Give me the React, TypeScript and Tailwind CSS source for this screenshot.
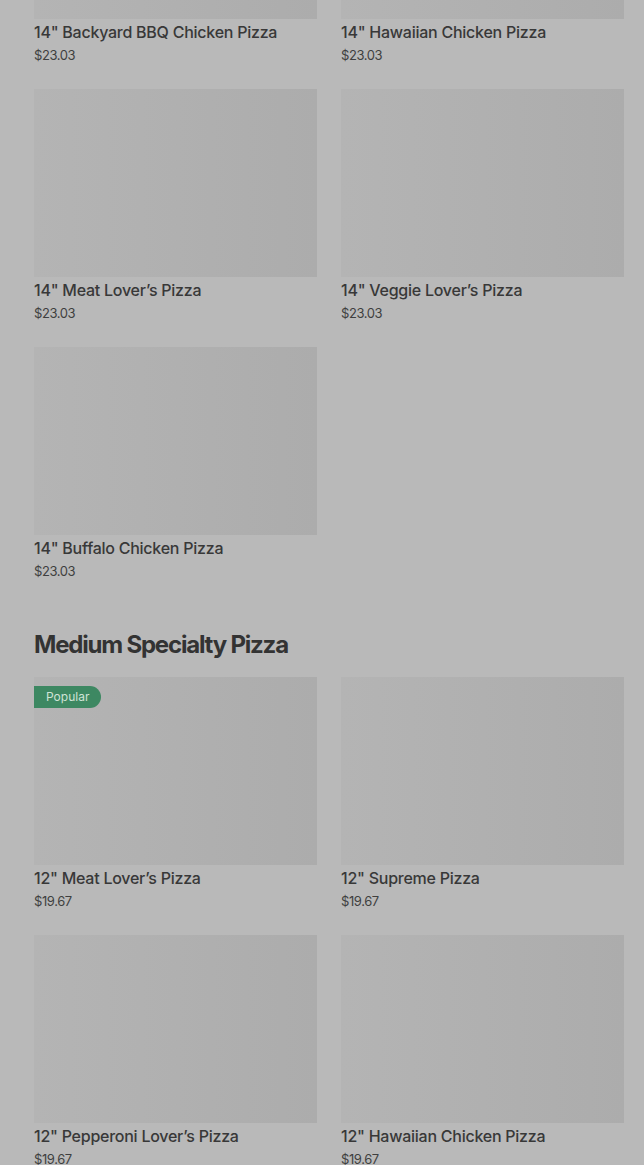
type Item = { name: string; price: string; popular?: boolean };

const largeItems: Item[] = [
  { name: '14" Backyard BBQ Chicken Pizza', price: "$23.03" },
  { name: '14" Hawaiian Chicken Pizza', price: "$23.03" },
  { name: '14" Meat Lover\u2019s Pizza', price: "$23.03" },
  { name: '14" Veggie Lover\u2019s Pizza', price: "$23.03" },
  { name: '14" Buffalo Chicken Pizza', price: "$23.03" },
];

const mediumItems: Item[] = [
  { name: '12" Meat Lover\u2019s Pizza', price: "$19.67", popular: true },
  { name: '12" Supreme Pizza', price: "$19.67" },
  { name: '12" Pepperoni Lover\u2019s Pizza', price: "$19.67" },
  { name: '12" Hawaiian Chicken Pizza', price: "$19.67" },
];

const MenuCard = ({ item }: { item: Item }) => {
  return (
    <div className="flex flex-col">
      <div className="relative h-[188px] w-full bg-gradient-to-r from-[#b4b4b4] to-[#acacac]">
        {item.popular && (
          <span className="absolute left-0 top-[9px] flex h-[22px] items-center rounded-r-full bg-[#3d8862] pl-3 pr-3 text-[12px] text-[#cfe3d6]">
            Popular
          </span>
        )}
      </div>
      <div className="mt-[2px] text-[16px] font-medium leading-[22px] tracking-[-0.25px] text-[#383838]">
        {item.name}
      </div>
      <div className="mt-[2px] text-[13px] leading-[20px] tracking-[-0.4px] text-[#3f3f3f]">{item.price}</div>
    </div>
  );
};

export default function App() {
  return (
    <div
      className="h-[1165px] w-full overflow-hidden bg-[#b9b9b9]"
      style={{ fontFamily: "Inter, 'Liberation Sans', sans-serif" }}
    >
      <div className="-mt-[169px] pl-[34px] pr-[20px]">
        <div className="grid grid-cols-2 gap-x-[24px] gap-y-[24px]">
          {largeItems.map((item) => (
            <MenuCard key={item.name} item={item} />
          ))}
        </div>
        <h2 className="mt-[49px] mb-[17px] text-[24px] font-bold leading-[30px] tracking-[-1.2px] text-[#333333]">
          Medium Specialty Pizza
        </h2>
        <div className="grid grid-cols-2 gap-x-[24px] gap-y-[24px]">
          {mediumItems.map((item) => (
            <MenuCard key={item.name} item={item} />
          ))}
        </div>
      </div>
    </div>
  );
}
